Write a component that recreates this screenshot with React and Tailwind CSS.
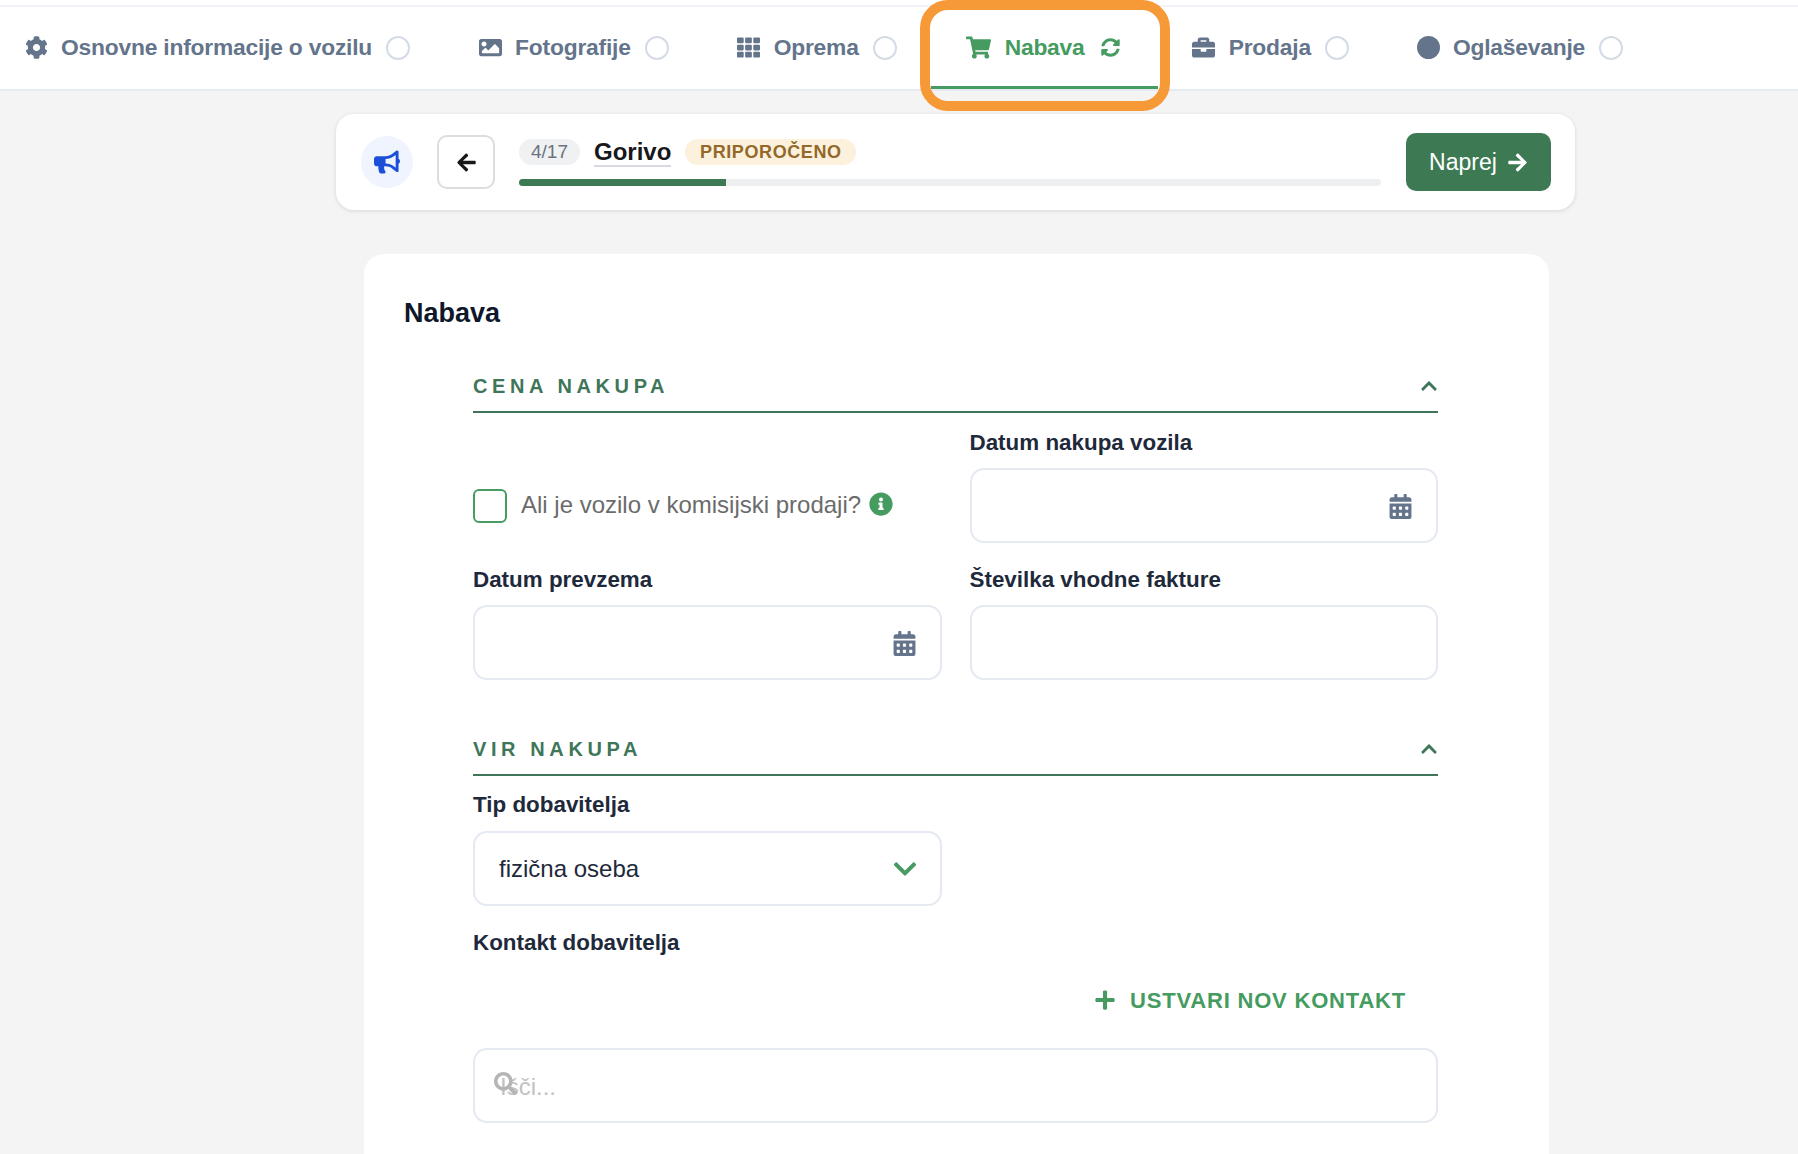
import {
  FaArrowLeft,
  FaArrowRight,
  FaBriefcase,
  FaBullhorn,
  FaCalendarAlt,
  FaChevronDown,
  FaChevronUp,
  FaCog,
  FaImage,
  FaInfoCircle,
  FaPlus,
  FaSearch,
  FaShoppingCart,
  FaSyncAlt,
  FaTh,
} from "react-icons/fa";

const Radio = () => (
  <span className="ml-[14px] w-6 h-6 rounded-full border-2 border-[#d5dbe6] bg-white shrink-0" />
);

const Tab = ({ icon, label, className = "px-[34px]" }) => (
  <div className={`flex items-center h-full ${className}`}>
    <span className="w-6 flex justify-center text-[#64748b] text-[23px] shrink-0">{icon}</span>
    <span className="ml-[13px] text-[22.8px] font-bold text-[#64748b] tracking-[-0.2px] whitespace-nowrap">{label}</span>
    <Radio />
  </div>
);

const Section = ({ title }) => (
  <div className="flex items-center justify-between h-[52px] border-b-2 border-[#3f7659]">
    <span className="text-[20px] font-bold tracking-[4.6px] text-[#3f7659]">{title}</span>
    <FaChevronUp className="text-[#3f7659] text-[18px]" />
  </div>
);

const Label = ({ children }) => (
  <div className="text-[22.4px] leading-[26px] font-bold text-[#1e293b] whitespace-nowrap">{children}</div>
);

const Input = ({ children, className = "" }) => (
  <div className={`h-[75px] rounded-[14px] border-2 border-[#e5e9f1] bg-white flex items-center justify-between ${className}`}>
    {children}
  </div>
);

const DateInput = () => (
  <Input className="pr-[23px] justify-end">
    <FaCalendarAlt className="text-[#64748b] text-[25px] mt-px" />
  </Input>
);

export default function App() {
  return (
    <div className="relative h-[1154px] overflow-hidden bg-[#f4f4f5] font-['Liberation_Sans',Arial,sans-serif]">
      {/* top tabs */}
      <div className="h-[7px] bg-white border-b-2 border-[#f0f3f8]" />
      <div className="flex items-stretch h-[84px] bg-white border-b-2 border-[#e6eaf2] pb-px">
        <Tab icon={<FaCog />} label="Osnovne informacije o vozilu" className="pl-6 pr-[34px]" />
        <Tab icon={<FaImage />} label="Fotografije" />
        <Tab icon={<FaTh />} label="Oprema" />
        <div className="flex items-center w-[227px] pl-[35px] -mb-px pt-[2px] border-b-[3px] border-[#459b60]">
          <FaShoppingCart className="text-[#459b60] text-[25px] shrink-0" />
          <span className="ml-[14px] text-[22.8px] font-bold text-[#459b60] tracking-[-0.2px]">Nabava</span>
          <FaSyncAlt className="ml-4 text-[#459b60] text-[19px] shrink-0" />
        </div>
        <Tab icon={<FaBriefcase />} label="Prodaja" />
        <div className="flex items-center h-full pl-[34px]">
          <span className="w-[23px] h-[23px] rounded-full bg-[#64748b] shrink-0" />
          <span className="ml-[13px] text-[22.8px] font-bold text-[#64748b] tracking-[-0.2px]">Oglaševanje</span>
          <Radio />
        </div>
      </div>

      {/* step bar */}
      <div className="ml-[336px] mt-[23px] w-[1239px] h-[96px] rounded-[18px] bg-white shadow-[0_1px_4px_rgba(0,0,0,0.12)] flex items-center pl-[25px] pr-6">
        <div className="w-[52px] h-[52px] rounded-full bg-[#eff4ff] flex items-center justify-center shrink-0">
          <FaBullhorn className="text-[#1d4ed8] text-[26px]" />
        </div>
        <div className="ml-[24px] w-[58px] h-[54px] rounded-[10px] border-2 border-[#dddddf] flex items-center justify-center shrink-0">
          <FaArrowLeft className="text-[#18181b] text-[21px]" />
        </div>
        <div className="ml-6 w-[862px] shrink-0">
          <div className="flex items-center h-[27px]">
            <span className="w-[61px] h-[26px] rounded-full bg-[#f0f1f3] text-[19px] text-[#6b7280] flex items-center justify-center">4/17</span>
            <span className="ml-[14px] text-[24px] leading-[27px] font-bold text-[#18181b] border-b-2 border-[#d8d8de]">Gorivo</span>
            <span className="ml-[14px] w-[171px] h-[26px] rounded-full bg-[#fbf1dc] text-[18px] font-bold tracking-[0.6px] text-[#93682a] flex items-center justify-center">PRIPOROČENO</span>
          </div>
          <div className="mt-[13px] h-[7px] rounded-full bg-[#eeeff1] overflow-hidden">
            <div className="w-[207px] h-full bg-[#3d7a54]" />
          </div>
        </div>
        <div className="ml-[25px] w-[145px] h-[58px] rounded-[10px] bg-[#3d7a54] text-white text-[23px] flex items-center justify-center gap-[10px] shrink-0">
          Naprej
          <FaArrowRight className="text-[21px]" />
        </div>
      </div>

      {/* form card */}
      <div className="ml-[364px] mt-[44px] w-[1185px] h-[920px] rounded-t-[20px] bg-white">
        <h1 className="pl-10 pt-[44px] text-[27px] leading-[31px] font-bold text-[#0f172a]">Nabava</h1>
        <div className="ml-[109px] w-[965px] mt-[32px]">
          <Section title="CENA NAKUPA" />

          <div className="grid grid-cols-2 gap-x-[28px] mt-[17px]">
            <div className="flex flex-col justify-end">
              <div className="flex items-center h-[75px]">
                <span className="w-[34px] h-[34px] rounded-[6px] border-2 border-[#4a9b62] shrink-0" />
                <span className="ml-[14px] text-[24px] text-[#6b6b6b] -mt-[2px] whitespace-nowrap">Ali je vozilo v komisijski prodaji?</span>
                <FaInfoCircle className="ml-[8px] text-[#459b60] text-[24px] -mt-[3px] shrink-0" />
              </div>
            </div>
            <div>
              <Label>Datum nakupa vozila</Label>
              <div className="mt-[12px]">
                <DateInput />
              </div>
            </div>
            <div className="mt-[24px]">
              <Label>Datum prevzema</Label>
              <div className="mt-[12px]">
                <DateInput />
              </div>
            </div>
            <div className="mt-[24px]">
              <Label>Številka vhodne fakture</Label>
              <div className="mt-[12px]">
                <Input />
              </div>
            </div>
          </div>

          <div className="mt-[44px]">
            <Section title="VIR NAKUPA" />
          </div>

          <div className="mt-[16px]">
            <Label>Tip dobavitelja</Label>
            <div className="mt-[13px] w-[469px]">
              <Input className="pl-[24px] pr-[22px]">
                <span className="text-[24px] text-[#1e293b]">fizična oseba</span>
                <FaChevronDown className="text-[#459b60] text-[26px]" />
              </Input>
            </div>
          </div>

          <div className="mt-[24px]">
            <Label>Kontakt dobavitelja</Label>
          </div>

          <div className="flex justify-end items-center mt-[28px] pr-[32px] h-[32px] text-[#459b60]">
            <FaPlus className="text-[22px]" />
            <span className="ml-[14px] text-[22px] font-bold tracking-[0.8px] whitespace-nowrap">USTVARI NOV KONTAKT</span>
          </div>

          <div className="relative mt-[32px]">
            <Input className="pl-[25px]">
              <span className="text-[24px] text-[#c2c2c2] mt-[3px]">Išči...</span>
            </Input>
            <FaSearch className="absolute left-[21px] top-[24px] text-[#b5b5b5] text-[23px]" />
          </div>
        </div>
      </div>

      {/* highlight around the active tab */}
      <div className="absolute left-[920px] top-0 w-[250px] h-[111px] rounded-[28px] border-[10px] border-[#f59a37]" />
    </div>
  );
}
